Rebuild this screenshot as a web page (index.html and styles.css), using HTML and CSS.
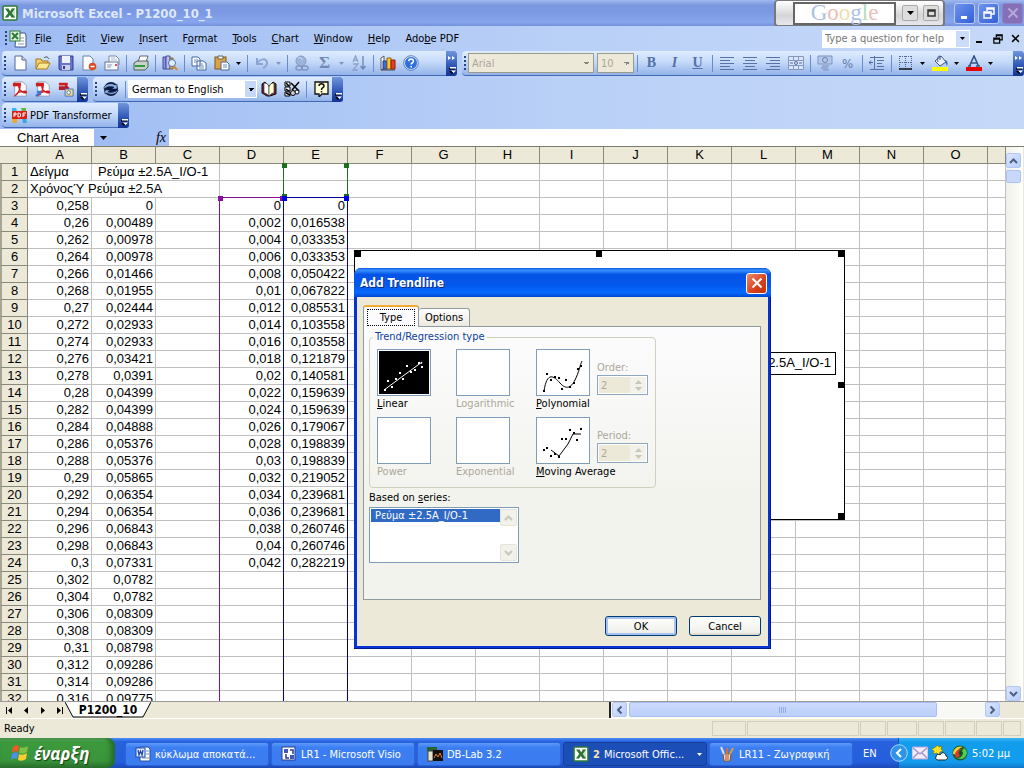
FILE: index.html
```html
<!DOCTYPE html>
<html lang="el">
<head>
<meta charset="utf-8">
<title>Microsoft Excel - P1200_10_1</title>
<link rel="stylesheet" href="styles.css">
</head>
<body>
<svg class="defs" aria-hidden="true">
  <symbol id="excel" viewBox="0 0 16 16"><rect x="1" y="1" width="14" height="14" rx="1" fill="#fff" stroke="#2d7a35" stroke-width="1.6"/><path d="M9 3h4v10H9z" fill="#cfe5cb"/><path d="M3 3.5h3.500l1.700 2.700L10 3.500h3L9.800 8l3.300 4.500H9.600L7.900 9.900 6.100 12.500H2.900L6.200 8z" fill="#2c7734"/></symbol>
  <symbol id="down" viewBox="0 0 7 4"><path d="M0 0h7L3.500 4z" fill="currentColor"/></symbol>
  <symbol id="cap" viewBox="0 0 11 24"><path d="M3 16h6v1.500H3zM3 19h6l-3 3z" fill="#000"/><path d="M4 15h6v1.500H4zM5 18.500h5l-2.500 2.500z" fill="#fff"/></symbol>
  <symbol id="more" viewBox="0 0 11 24"><path d="M2 4l3 2-3 2zM6 4l3 2-3 2z" fill="#fff"/></symbol>
  <symbol id="pdf" viewBox="0 0 18 18"><path d="M3 1h9l4 4v12H3z" fill="#fff" stroke="#8c9ab5"/><path d="M1 2h9v4H1z" fill="#d31c1c"/><path d="M4 16c2-1 5-6 5-9 0-2-2-2-1 1 1 3 5 6 8 5 1-1-1-2-4-1-3 0-6 1-8 4z" fill="none" stroke="#d31c1c" stroke-width="1.500"/></symbol>
  <symbol id="page" viewBox="0 0 16 16"><path d="M3 1h7l4 4v10H3z" fill="#fff" stroke="#52699a"/><path d="M10 1v4h4" fill="#c9d8f3" stroke="#52699a"/></symbol>
  <symbol id="lines" viewBox="0 0 16 16"><path d="M1 2.500h14M1 5.500h10M1 8.500h14M1 11.500h10M1 14.500h14" stroke="#5872a6"/></symbol>
  <symbol id="up" viewBox="0 0 9 6"><path d="M1 5l3.500-3.500L8 5" fill="none" stroke="currentColor" stroke-width="2"/></symbol>
  <symbol id="restore" viewBox="0 0 12 12"><path d="M4 4V1h7v6H8M4 2h7" fill="none" stroke="currentColor" stroke-width="1.500"/><path d="M1 5h7v6H1zM1 6h7" fill="none" stroke="currentColor" stroke-width="1.500"/></symbol>
  <symbol id="cross" viewBox="0 0 12 12"><path d="M1.500 1.500l9 9M10.500 1.500l-9 9" stroke="currentColor" stroke-width="2"/></symbol>
</svg>

<header class="titlebar">
  <svg class="i16"><use href="#excel"/></svg>
  <h1>Microsoft Excel - P1200_10_1</h1>
  <div class="deskbar">
    <div class="google"><span class="g-b">G</span><span class="g-r">o</span><span class="g-y">o</span><span class="g-b">g</span><span class="g-g">l</span><span class="g-r">e</span></div>
    <button class="db-btn" aria-label="Search options"><svg width="7" height="4"><use href="#down"/></svg></button>
    <button class="db-btn" aria-label="Open window"><svg width="9" height="8" viewBox="0 0 9 8"><path d="M1 1h7v6H1zM1 2h7" fill="none" stroke="#333" stroke-width="1.500"/></svg></button>
  </div>
  <div class="winbtns">
    <button aria-label="Minimize"><svg width="12" height="12"><path d="M2 9h6v3H2z" fill="#fff"/></svg></button>
    <button aria-label="Restore"><svg width="12" height="12"><use href="#restore"/></svg></button>
    <button class="off" aria-label="Close"><svg width="12" height="12"><use href="#cross"/></svg></button>
  </div>
</header>

<div class="chrome">
  <nav class="menubar">
    <span class="grip"></span>
    <svg width="18" height="18" viewBox="0 0 18 18"><path d="M7 3h9l1 2v12H6z" fill="#fff" stroke="#3d578c"/><path d="M12 8h3M12 11h3M9 14h6" stroke="#7f97c9"/><rect x="1" y="1" width="10" height="10" fill="#e4f2df" stroke="#2d7a35"/><path d="M3 3l6 6M9 3L3 9" stroke="#2d7a35" stroke-width="2"/></svg>
    <button><u>F</u>ile</button><button><u>E</u>dit</button><button><u>V</u>iew</button><button><u>I</u>nsert</button><button>F<u>o</u>rmat</button><button><u>T</u>ools</button><button><u>C</u>hart</button><button><u>W</u>indow</button><button><u>H</u>elp</button><button>Ado<u>b</u>e PDF</button>
    <div class="ask"><input type="text" aria-label="Type a question for help" placeholder="Type a question for help"><button aria-label="Recent questions"><svg width="5" height="3"><use href="#down"/></svg></button></div>
    <div class="docbtns">
      <button aria-label="Minimize document"><svg width="10" height="10"><path d="M1 7h6v2H1z"/></svg></button>
      <button aria-label="Restore document"><svg width="10" height="10"><use href="#restore"/></svg></button>
      <button aria-label="Close document"><svg width="9" height="9"><use href="#cross"/></svg></button>
    </div>
  </nav>

  <div class="bars">
    <div class="bar standard">
      <span class="grip"></span>
      <button class="tb" aria-label="New"><svg class="i16"><use href="#page"/></svg></button>
      <button class="tb" aria-label="Open"><svg class="i16" viewBox="0 0 16 16"><path d="M1 14V4h5l1 2h6v3" fill="#f7d268" stroke="#9c7420"/><path d="M1 14l3-6h11l-3 6z" fill="#ffe690" stroke="#a87b22"/><path d="M9 3c2-2 4-1 5 1" fill="none" stroke="#444"/></svg></button>
      <button class="tb" aria-label="Save"><svg class="i16" viewBox="0 0 16 16"><path d="M1 1h14v14H2l-1-1z" fill="#6a74c8" stroke="#353d88"/><path d="M4 1h8v7H4z" fill="#eef2ff"/><path d="M4 10h8v5H4z" fill="#c9cfe9"/><path d="M5 11h2v3H5z" fill="#353d88"/></svg></button>
      <button class="tb" aria-label="Permission"><svg class="i16" viewBox="0 0 16 16"><path d="M2 1h7l3 3v11H2z" fill="#fff" stroke="#6a7ea8"/><circle cx="11.500" cy="11.500" r="3.800" fill="#dd4a22"/><path d="M9.500 11.500h4" stroke="#fff" stroke-width="1.500"/></svg></button>
      <button class="tb" aria-label="E-mail"><svg class="i16" viewBox="0 0 16 16"><path d="M5 7V1h7l3 3v6" fill="#fff" stroke="#7788aa"/><path d="M7 3h4M7 5h6" stroke="#a9b6d2"/><rect x="1" y="7" width="13" height="8" fill="#f7f9ff" stroke="#667799"/><path d="M3 10h5M3 12h4" stroke="#8895b5"/><path d="M11 9h2v2h-2z" fill="#d55"/></svg></button>
      <i class="sep"></i>
      <button class="tb" aria-label="Print"><svg class="i16" viewBox="0 0 16 16"><path d="M5 7l2-6h8l-2 6" fill="#fff" stroke="#667"/><path d="M1 8l3-2h11v6l-3 3H1z" fill="#c7d3c9" stroke="#4d5f60"/><path d="M2 11h10" stroke="#2d9b40" stroke-width="2"/></svg></button>
      <i class="sep"></i>
      <button class="tb" aria-label="Research"><svg class="i16" viewBox="0 0 16 16"><path d="M1 2h3v12H1z" fill="#8e93dd" stroke="#464c98"/><path d="M4 1h4v13H4z" fill="#b9bff0" stroke="#464c98"/><path d="M8 3h3v11H8z" fill="#e0b56a" stroke="#7d6230"/><circle cx="10" cy="8" r="3.500" fill="#def" stroke="#57729e"/><path d="M12 11l3 4" stroke="#d0882a" stroke-width="2"/></svg></button>
      <i class="sep"></i>
      <button class="tb" aria-label="Copy"><svg class="i16" viewBox="0 0 16 16"><path d="M1 2h6l2 2v7H1zM6 6h6l3 2v7H6z" fill="#fff" stroke="#4767a4"/><path d="M3 5h4M3 7h3M8 9h4M8 11h5M8 13h5" stroke="#6b8ac8"/></svg></button>
      <button class="tb" aria-label="Paste"><svg class="i16" viewBox="0 0 16 16"><rect x="1" y="2" width="11" height="12" fill="#dca245" stroke="#80571b"/><path d="M4 1h5v3H4z" fill="#eee" stroke="#666"/><path d="M7 7h6l2 2v6H7z" fill="#fff" stroke="#4767a4"/><path d="M9 10h4M9 12h4" stroke="#6b8ac8"/></svg></button>
      <button class="drop" aria-label="Paste options"><svg width="5" height="3"><use href="#down"/></svg></button>
      <i class="sep"></i>
      <button class="tb" disabled aria-label="Undo"><svg class="i16" viewBox="0 0 16 16"><path d="M3 3v6h6M3 9c3-6 10-6 10-1 0 3-2 4-4 5" fill="none" stroke="#8da5d4" stroke-width="2"/></svg></button>
      <button class="drop off" disabled aria-label="Undo list"><svg width="5" height="3"><use href="#down"/></svg></button>
      <i class="sep"></i>
      <button class="tb" disabled aria-label="Hyperlink"><svg class="i16" viewBox="0 0 16 16"><circle cx="7" cy="6" r="5" fill="#9eb3da" stroke="#889dc6"/><path d="M4 3c2-1 4 0 4 2" stroke="#d4e2fa" fill="none"/><rect x="2" y="11" width="6" height="4" rx="2" fill="none" stroke="#8195bf" stroke-width="1.500"/><rect x="8" y="11" width="6" height="4" rx="2" fill="none" stroke="#8195bf" stroke-width="1.500"/></svg></button>
      <button class="tb sigma" disabled aria-label="AutoSum">Σ</button>
      <button class="drop off" disabled aria-label="AutoSum options"><svg width="5" height="3"><use href="#down"/></svg></button>
      <button class="tb" disabled aria-label="Sort ascending"><svg class="i16" viewBox="0 0 16 16"><path d="M2 7l2.500-6L7 7M3 5h3M2 9h5l-5 6h5" fill="none" stroke="#8da0c9" stroke-width="1.300"/><path d="M12 1v13M9.500 11l2.500 3 2.500-3" fill="none" stroke="#6c83b5" stroke-width="1.300"/></svg></button>
      <i class="sep"></i>
      <button class="tb" aria-label="Chart Wizard"><svg class="i16" viewBox="0 0 16 16"><path d="M1 15V3l3-2v13z" fill="#fff" stroke="#556"/><path d="M3 6h4v8H3z" fill="#3c6cd8" stroke="#223e8a"/><path d="M7 3h4v11H7z" fill="#ffc62b" stroke="#8d6413"/><path d="M11 5h4v9h-4z" fill="#e6401e" stroke="#8c210d"/><path d="M1 15h14" stroke="#444"/></svg></button>
      <button class="tb" aria-label="Help"><svg class="i16" viewBox="0 0 16 16"><circle cx="8" cy="8" r="6.500" fill="#2f6fdb" stroke="#e8f0ff"/><circle cx="8" cy="8" r="7.300" fill="none" stroke="#3460b0" stroke-width=".7"/><path d="M5.700 6.300c0-3 4.800-3 4.800-.2 0 1.700-2.300 1.600-2.300 3.400M8.200 11v1.600" fill="none" stroke="#fff" stroke-width="1.600"/></svg></button>
      <span class="grow"></span>
      <button class="cap" aria-label="Toolbar options"><svg width="11" height="24"><use href="#more"/><use href="#cap"/></svg></button>
    </div>
    <div class="bar formatting">
      <span class="grip"></span>
      <select class="combo font" disabled aria-label="Font"><option>Arial</option></select>
      <select class="combo size" disabled aria-label="Font size"><option>10</option></select>
      <i class="sep"></i>
      <button class="tb fmt" disabled aria-label="Bold"><b>B</b></button>
      <button class="tb fmt" disabled aria-label="Italic"><em>I</em></button>
      <button class="tb fmt" disabled aria-label="Underline"><u>U</u></button>
      <i class="sep"></i>
      <button class="tb" disabled aria-label="Align left"><svg class="i16"><use href="#lines"/></svg></button>
      <button class="tb" disabled aria-label="Center"><svg class="i16" viewBox="0 0 16 16"><path d="M1 2.500h14M3 5.500h10M1 8.500h14M3 11.500h10M1 14.500h14" stroke="#5872a6"/></svg></button>
      <button class="tb" disabled aria-label="Align right"><svg class="i16 flip"><use href="#lines"/></svg></button>
      <button class="tb" disabled aria-label="Merge and center"><svg class="i16" viewBox="0 0 16 16"><path d="M.5 1.500h15v13H.5zM.5 5.500h15M.5 10.500h15M5.500 1.500v4M10.500 1.500v4M5.500 10.500v4M10.500 10.500v4" fill="#d9e5fb" stroke="#8497bf"/><path d="M2 8h3M11 8h3" stroke="#566c9c"/><circle cx="8" cy="8" r="1.500" fill="none" stroke="#566c9c"/></svg></button>
      <i class="sep"></i>
      <button class="tb" disabled aria-label="Currency"><svg class="i16" viewBox="0 0 16 16"><path d="M1 1h14v8H1z" fill="#b6c8ea" stroke="#7e93c0"/><circle cx="8" cy="5" r="2.500" fill="none" stroke="#6c82b1"/><path d="M5 11h7M4 13h7M6 15h6" stroke="#8c9fc9" stroke-width="1.500"/></svg></button>
      <button class="tb pct" disabled aria-label="Percent">%</button>
      <i class="sep"></i>
      <button class="tb" disabled aria-label="Decrease indent"><svg class="i16" viewBox="0 0 16 16"><path d="M1 2.500h14M8 5.500h7M8 8.500h5M8 11.500h7M1 14.500h14M5.500 1v14" stroke="#5872a6"/><path d="M0 7.500h4M0 7.500l2-2M0 7.500l2 2" stroke="#47639e" fill="none"/></svg></button>
      <i class="sep"></i>
      <button class="tb" aria-label="Borders"><svg class="i16" viewBox="0 0 16 16"><path d="M2 1.500h12M2 7.500h12M1.500 1v13M7.500 1v13M13.500 1v13" stroke="#52658f" stroke-dasharray="1 1"/><path d="M1 14h13" stroke="#111" stroke-width="1.500"/></svg></button>
      <button class="drop" aria-label="Border options"><svg width="5" height="3"><use href="#down"/></svg></button>
      <button class="tb" aria-label="Fill colour"><svg class="i16" viewBox="0 0 16 16"><path d="M3 6l6-5 5 6-6 4z" fill="#e9effb" stroke="#40557f"/><path d="M6 7c-1-4 0-6 2-6v4" fill="none" stroke="#40557f"/><path d="M13 5c3 1 3 4 2 6-1-2-1-3-2-4z" fill="#3769bd"/><path d="M0 12h16v4H0z" fill="#ff0"/></svg></button>
      <button class="drop" aria-label="Fill options"><svg width="5" height="3"><use href="#down"/></svg></button>
      <button class="tb" aria-label="Font colour"><svg class="i16" viewBox="0 0 16 16"><path d="M3.500 11L8 1l4.500 10M5 8h6M2 11h3M10 11h4" fill="none" stroke="#34548f" stroke-width="1.600"/><path d="M0 12h16v4H0z" fill="#e80000"/></svg></button>
      <button class="drop" aria-label="Font colour options"><svg width="5" height="3"><use href="#down"/></svg></button>
      <span class="grow"></span>
      <button class="cap" aria-label="Toolbar options"><svg width="11" height="24"><use href="#more"/><use href="#cap"/></svg></button>
    </div>
  </div>

  <div class="bars">
    <div class="bar">
      <span class="grip"></span>
      <button class="tb" aria-label="Convert to PDF"><svg class="i16"><use href="#pdf"/></svg></button>
      <button class="tb" aria-label="Convert and e-mail"><svg class="i16" viewBox="0 0 18 18"><use href="#pdf"/><path d="M1 17l5-5M2 12h4v4" stroke="#3978d8" stroke-width="2" fill="none"/></svg></button>
      <button class="tb" aria-label="Convert and review"><svg class="i16" viewBox="0 0 18 18"><path d="M1 2h10v3H1z" fill="#d31c1c"/><path d="M1 6h7V3l5 5-5 5v-3H1z" fill="#b51b2b"/><path d="M8 9h9v8H8z" fill="#f5dc7a" stroke="#426cc4"/><circle cx="12" cy="13" r="2" fill="#fff" stroke="#426cc4"/></svg></button>
      <button class="cap" aria-label="Toolbar options"><svg width="11" height="24"><use href="#cap"/></svg></button>
    </div>
    <div class="bar">
      <span class="grip"></span>
      <button class="tb" aria-label="Translate"><svg class="i16" viewBox="0 0 16 16"><circle cx="8" cy="8" r="7" fill="#0b1942"/><path d="M1 6c3-4 8-4 11-2l2-1v5H9l2-2C8 5 4 5 1 8zM15 10c-3 4-8 4-11 2l-2 1V9h5l-2 2c3 1 7 0 10-2z" fill="#90b4ea" stroke="#0b1942" stroke-width=".6"/></svg></button>
      <i class="sep"></i>
      <select class="combo lang" aria-label="Translation direction"><option>German to English</option></select>
      <button class="tb" aria-label="Dictionary"><svg class="i16" viewBox="0 0 16 16"><path d="M1 3l3-2 4 4 4-4 3 2v10l-6 2H6l-5-3z" fill="#7a2742" stroke="#111"/><path d="M3 2c3 0 4 1 5 4v9c-2-2-3-3-5-3z" fill="#fff" stroke="#222" stroke-width=".6"/><path d="M13 2c-3 0-4 1-5 4v9c2-2 3-3 5-3z" fill="#ffffc9" stroke="#222" stroke-width=".6"/></svg></button>
      <button class="tb" aria-label="Options"><svg class="i16" viewBox="0 0 16 16"><path d="M1 1h5v4H1zM1 6h5v4H1zM1 11h5v4H1z" fill="#fff" stroke="#000"/><path d="M2 2l3 3M2 8l3 2M2 12l4 2M7 2l8 8M15 1L8 9" stroke="#000" stroke-width="1.500"/><circle cx="9" cy="12" r="2.500" fill="#ccd" stroke="#000"/><circle cx="13" cy="11" r="2" fill="#fff" stroke="#000"/></svg></button>
      <i class="sep"></i>
      <button class="tb" aria-label="Translator help"><svg class="i16" viewBox="0 0 16 16"><path d="M2 1h13v12H9l-3 3v-3H2z" fill="#ffffd8" stroke="#111" stroke-width="1.300"/><path d="M6 5c0-3 5-3 5 0 0 2-2.500 1.500-2.500 4M8.500 10v1.500" fill="none" stroke="#111" stroke-width="1.500"/></svg></button>
      <button class="cap" aria-label="Toolbar options"><svg width="11" height="24"><use href="#cap"/></svg></button>
    </div>
  </div>

  <div class="bars">
    <div class="bar">
      <span class="grip"></span>
      <button class="pdft"><svg width="17" height="16" viewBox="0 0 17 16"><path d="M1 1h4l1 3H1z" fill="#39b6e6"/><path d="M10 1h5v4h-4z" fill="#5eb944"/><path d="M1 11h5v5H2z" fill="#f2a52b"/><path d="M11 11h4l1 5h-4z" fill="#34a9dc"/><rect x="1" y="4" width="15" height="8" fill="#dd2016"/><path d="M3 10V6h2v2H3M7 6v4h1.500l1-1V7l-1-1zM12 10V6h3M12 8h2" fill="none" stroke="#fff"/></svg>PDF Transformer</button>
      <button class="cap" aria-label="Toolbar options"><svg width="11" height="24"><use href="#cap"/></svg></button>
    </div>
  </div>
</div>

<div class="formula">
  <input class="namebox" type="text" value="Chart Area" aria-label="Name Box">
  <div class="fxarea"><button aria-label="Name list"><svg width="7" height="4"><use href="#down"/></svg></button><button class="fx" aria-label="Insert Function">fx</button></div>
  <input class="fxinput" type="text" aria-label="Formula Bar">
</div>

<main class="sheet">
  <div class="cells">
    <table>
      <colgroup id="cols"></colgroup>
      <thead><tr id="head"></tr></thead>
      <tbody id="rows"></tbody>
    </table>
    <div class="range green"><i></i><i></i><i></i><i></i></div>
    <div class="range purple"><i></i><i></i></div>
    <div class="range blue"><i></i><i></i></div>
    <div class="chart">
      <div class="legend">Ρεύμα ±2.5A_I/O-1</div>
      <i class="h nw"></i><i class="h n"></i><i class="h ne"></i><i class="h e"></i><i class="h se"></i>
    </div>
  </div>
  <div class="vscroll">
    <button class="sb" aria-label="Scroll up"><svg width="9" height="6"><use href="#up"/></svg></button>
    <span class="vthumb"></span>
    <span class="grow"></span>
    <button class="sb" aria-label="Scroll down"><svg class="turn" width="9" height="6"><use href="#up"/></svg></button>
  </div>
</main>

<div class="tabs">
  <div class="nav">
    <button aria-label="First sheet"><svg width="8" height="7"><path d="M1 0h1v7H1zM7 0v7L3 3.500z"/></svg></button>
    <button aria-label="Previous sheet"><svg width="8" height="7"><path d="M6 0v7L2 3.500z"/></svg></button>
    <button aria-label="Next sheet"><svg width="8" height="7"><path d="M2 0v7l4-3.500z"/></svg></button>
    <button aria-label="Last sheet"><svg width="8" height="7"><path d="M1 0v7l4-3.500zM6 0h1v7H6z"/></svg></button>
  </div>
  <button class="tab"><svg viewBox="0 0 86 16" preserveAspectRatio="none"><path d="M0 0l8 15h70l8-15" fill="#fff" stroke="#000"/></svg><span>P1200_10</span></button>
  <span class="grow"></span>
  <div class="hscroll">
    <button class="sb" aria-label="Scroll left"><svg class="left" width="9" height="6"><use href="#up"/></svg></button>
    <span class="hthumb"></span>
    <span class="htrack"></span>
    <button class="sb" aria-label="Scroll right"><svg class="right" width="9" height="6"><use href="#up"/></svg></button>
  </div>
</div>

<div class="status"><span class="ready">Ready</span><span class="w34"></span><span class="w112"></span><span class="w26"></span><span class="w30"></span><span class="w26"></span><span class="w30"></span><span class="w26"></span><span class="w18"></span></div>

<footer class="taskbar">
  <button class="start"><svg width="18" height="18" viewBox="0 0 18 18"><path d="M2 3c2-2 4-2 6-1L7 8C5 7 3 7 1 9z" fill="#f0592a"/><path d="M9 3c2 1 5 1 8-1l-1 6c-3 2-5 2-8 1z" fill="#7ec242"/><path d="M1 10c2-2 4-2 6-1l-1 6c-2-1-4-1-6 1z" fill="#4d8ff0"/><path d="M8 10c2 1 5 1 8-1l-1 6c-3 2-5 2-8 1z" fill="#fccd34"/></svg>έναρξη</button>
  <div class="tasks">
    <button><svg class="i16" viewBox="0 0 16 16"><path d="M5 1h8l2 2v12H5z" fill="#fff" stroke="#2b4f9e"/><path d="M11 5h3M11 8h3M7 12h7" stroke="#6d8fd1"/><rect x="1" y="2" width="9" height="9" fill="#e6eeff" stroke="#1d47a8"/><path d="M3 4l1 5 1.500-4L7 9l1-5" fill="none" stroke="#1d47a8" stroke-width="1.300"/></svg><span>κύκλωμα αποκατά...</span></button>
    <button><svg class="i16" viewBox="0 0 16 16"><rect x="1" y="1" width="13" height="13" fill="#fff" stroke="#273e92"/><path d="M3 3h4v4H3zM9 9h4v4H9z" fill="#3f57bb"/><path d="M9 4h3v4M5 8v4h3" fill="none" stroke="#273e92" stroke-width="1.500"/></svg><span>LR1 - Microsoft Visio</span></button>
    <button><svg class="i16" viewBox="0 0 16 16"><rect x="0" y="1" width="10" height="4" fill="#2a6333"/><rect x="1" y="5" width="5" height="10" fill="#e8e4c5" stroke="#444"/><rect x="6" y="4" width="10" height="11" fill="#111"/><path d="M7 12l2-4 2 3 2-4 2 5" fill="none" stroke="#f0802b"/></svg><span>DB-Lab 3.2</span></button>
    <button class="active"><svg class="i16"><use href="#excel"/></svg><b>2</b><span>Microsoft Offic...</span><svg class="grp" width="5" height="3"><use href="#down"/></svg></button>
    <button><svg class="i16" viewBox="0 0 16 16"><path d="M4 8h8l-1 7H5z" fill="#efe1bf" stroke="#74582c"/><path d="M5 8L2 1" stroke="#ddd" stroke-width="2"/><path d="M8 8V2" stroke="#e06b2b" stroke-width="2"/><path d="M11 8l3-6" stroke="#d0a045" stroke-width="2"/><path d="M7 9v5M9 9v5" stroke="#c33"/></svg><span>LR11 - Ζωγραφική</span></button>
  </div>
  <span class="lang-ind">EN</span>
  <div class="tray">
    <button class="chev" aria-label="Show hidden icons"><svg width="18" height="18" viewBox="0 0 18 18"><circle cx="9" cy="9" r="8.300" fill="#2f93e8" stroke="#a4d9fb"/><path d="M11 5L7 9l4 4" fill="none" stroke="#fff" stroke-width="2"/></svg></button>
    <svg class="i16" viewBox="0 0 16 16"><rect x="0" y="2" width="16" height="12" rx="1" fill="#f0ecfa" stroke="#b7a7d5"/><path d="M1 3l7 6 7-6M1 13l5-5M15 13l-5-5" fill="none" stroke="#a48fc5" stroke-width="1.300"/></svg>
    <svg class="i16" viewBox="0 0 16 16"><path d="M6 0l1 2 3-1-1 3 2 2-3 1-1 3-2-2-4 1 1-3-3-2 3-1z" fill="#ffdf20" stroke="#5c6a14" stroke-width=".6"/><path d="M4 12c0-3 3-3 4-2 2-4 6-2 6 1 3 1 1 4-1 4H6c-2 0-3-2-2-3z" fill="#fff" stroke="#222"/></svg>
    <svg class="i16" viewBox="0 0 16 16"><circle cx="8" cy="8" r="7.500" fill="#1d5b2c"/><path d="M1 9C1 4 6 0 11 2 7 3 4 6 5 10z" fill="#f0d52d"/><path d="M4 13c-3-5 1-9 6-9-4 2-4 4-2 7z" fill="#e33a28"/><path d="M12 3c5 3 3 10-3 11-3 0-4-1-4-1 5 0 7-4 5-7z" fill="#4bd14a"/><circle cx="9" cy="8" r="1.500" fill="#143"/></svg>
    <time>5:02 μμ</time>
  </div>
</footer>

<section class="dialog" role="dialog" aria-labelledby="dlg-title">
  <div class="dlg-head"><h2 id="dlg-title">Add Trendline</h2><button class="x" aria-label="Close"><svg width="12" height="12"><use href="#cross"/></svg></button></div>
  <div class="dlg-body">
    <div class="dlg-tabs" role="tablist"><button class="on" role="tab" aria-selected="true"><span>Type</span></button><button role="tab" aria-selected="false">Options</button></div>
    <div class="panel">
      <fieldset>
        <legend>Trend/Regression type</legend>
        <div class="types">
          <button class="type sel"><span class="pic"><svg width="50" height="43"><path d="M5 39L43 11l-1 2" fill="none" stroke="#fff"/><path d="M5 38h2v2H5zM8 29h2v2H8zM12 35h2v2h-2zM16 27h2v2h-2zM20 21h2v2h-2zM23 27h2v2h-2zM27 14h2v2h-2zM31 20h2v2h-2zM35 18h2v2h-2zM39 11h2v2h-2zM42 15h2v2h-2z" fill="#fff"/></svg></span><span><u>L</u>inear</span></button>
          <button class="type" disabled><span class="pic"></span><span>Logarithmic</span></button>
          <button class="type"><span class="pic"><svg width="50" height="43"><path d="M6 40C9 20 16 25 22 32s11 5 15-3 5-15 7-19" fill="none" stroke="#000"/><path d="M5 39h2v2H5zM8 22h2v2H8zM12 28h2v2h-2zM16 25h2v2h-2zM20 26h2v2h-2zM23 37h2v2h-2zM27 28h2v2h-2zM31 35h2v2h-2zM35 31h2v2h-2zM39 17h2v2h-2zM42 14h2v2h-2z"/></svg></span><span><u>P</u>olynomial</span></button>
          <div class="spin"><label for="order">Order:</label><div class="num"><input id="order" type="text" value="2" disabled><span class="arrows"><svg width="7" height="4" class="turn"><use href="#down"/></svg><svg width="7" height="4"><use href="#down"/></svg></span></div></div>
          <button class="type" disabled><span class="pic"></span><span>Power</span></button>
          <button class="type" disabled><span class="pic"></span><span>Exponential</span></button>
          <button class="type"><span class="pic"><svg width="50" height="43"><path d="M13 31l8 6 9-12 5-10h8" fill="none" stroke="#000"/><path d="M5 30h2v2H5zM8 28h2v2H8zM12 36h2v2h-2zM16 34h2v2h-2zM20 37h2v2h-2zM23 19h2v2h-2zM27 19h2v2h-2zM31 10h2v2h-2zM35 13h2v2h-2zM38 20h2v2h-2zM42 9h2v2h-2z"/></svg></span><span><u>M</u>oving Average</span></button>
          <div class="spin"><label for="period">Period:</label><div class="num"><input id="period" type="text" value="2" disabled><span class="arrows"><svg width="7" height="4" class="turn"><use href="#down"/></svg><svg width="7" height="4"><use href="#down"/></svg></span></div></div>
        </div>
      </fieldset>
      <div class="series-label" id="series-label">Based on <u>s</u>eries:</div>
      <div class="list" role="listbox" aria-labelledby="series-label">
        <div class="opts"><div class="opt" role="option" aria-selected="true">Ρεύμα ±2.5A_I/O-1</div></div>
        <div class="lscroll"><button disabled aria-label="Up"><svg width="9" height="6"><use href="#up"/></svg></button><button disabled aria-label="Down"><svg class="turn" width="9" height="6"><use href="#up"/></svg></button></div>
      </div>
    </div>
    <div class="actions"><button class="default">OK</button><button>Cancel</button></div>
  </div>
</section>
<script src="sheet.js"></script>
</body>
</html>
```

FILE: styles.css
```css
* { box-sizing: border-box; }
body { margin: 0; height: 100vh; display: flex; flex-direction: column; overflow: hidden; position: relative; background: #ece9d8; color: #000; font: 11px "DejaVu Sans Condensed", "Noto Sans", sans-serif; }
button, input, select { font: inherit; color: inherit; margin: 0; padding: 0; border: 0; background: none; border-radius: 0; }
input { min-width: 0; outline: 0; }
svg { display: block; flex: none; }
.defs { position: absolute; width: 0; height: 0; }
.i16 { width: 16px; height: 16px; }
.grow { flex: 1; }
.flip { transform: scaleX(-1); }
.turn { transform: rotate(180deg); }
.left { transform: rotate(-90deg); }
.right { transform: rotate(90deg); }

.titlebar { flex: none; height: 26px; display: flex; align-items: center; padding: 0 1px 0 2px; background: linear-gradient(#a0b9f0 0, #7b97e0 20%, #7b98e2 45%, #86a6ec 85%, #7590dc); }
h1 { margin: 0; padding-left: 4px; flex: 1; font: bold 13px "DejaVu Sans Condensed", sans-serif; color: #dfe8fb; }
.deskbar { width: 171px; height: 27px; align-self: flex-start; display: flex; align-items: center; gap: 5px; padding: 0 4px 0 17px; margin-right: 9px; border: 2px solid #77777c; border-top-width: 1px; border-radius: 4px; background: linear-gradient(#fff, #d5d5d8 60%, #e8e8ec); }
.google { flex: 0 0 103px; height: 23px; margin-right: 1px; border: 2px solid #666; background: #fff; display: flex; justify-content: center; align-items: center; font: 23px/26px "Liberation Serif", serif; }
.g-b { color: #adc0e6; } .g-r { color: #edbdb9; } .g-y { color: #eee0ae; } .g-g { color: #b5dcb8; }
.db-btn { width: 16px; height: 16px; display: grid; place-items: center; border: 1px solid #aaa; border-radius: 2px; background: #ddd; }
.winbtns { display: flex; gap: 3px; color: #fff; }
.winbtns button { width: 21px; height: 21px; display: grid; place-items: center; border: 1px solid #b9caf5; border-radius: 3px; background: linear-gradient(135deg, #6f93ee, #3060d8); }
.winbtns .off { background: #8570b8; border-color: #8d84c8; color: #b5a8d8; }

.chrome { flex: none; background: linear-gradient(90deg, #9ebcf3, #b9d0f7 55%, #c5d8f8); }
.menubar { height: 25px; display: flex; align-items: center; padding-left: 3px; }
.grip { flex: none; width: 6px; height: 17px; background: repeating-linear-gradient(#27427d 0 2px, transparent 2px 4px) 2px 1px / 2px 100% no-repeat; }
.menubar > button { padding: 0 7px 0 8px; white-space: nowrap; }
.ask { margin-left: auto; width: 148px; height: 18px; background: #fff; display: flex; align-items: center; }
.ask input { flex: 1; padding-left: 3px; }
.ask input::placeholder { color: #777; opacity: 1; }
.ask button { width: 13px; height: 16px; display: grid; place-items: center; background: #cbdcfa; margin-right: 1px; }
.docbtns { display: flex; gap: 8px; padding: 0 4px 0 5px; }

.bars { display: flex; gap: 5px; padding-left: 2px; height: 26px; }
.bar { display: flex; align-items: center; height: 25px; border-bottom: 1px solid #4469b4; border-radius: 4px 0 4px 4px; background: linear-gradient(#dfecff, #c5daf9 45%, #93b3e9); }
.standard { width: 455px; }
.formatting { flex: 1; }
.tb { flex: none; width: 23px; height: 22px; display: grid; place-items: center; }
.drop { width: 11px; height: 22px; display: grid; place-items: center; }
.off { color: #8194bb; }
.sep { flex: none; width: 6px; height: 17px; background: linear-gradient(#6a8ccb, #6a8ccb) 3px 0 / 1px 100% no-repeat; }
.cap { width: 11px; height: 25px; margin-bottom: -1px; border-radius: 0 3px 3px 0; background: linear-gradient(#6f95dd, #2e55b4 60%, #113494); }
.sigma { font: bold 17px "Liberation Serif", serif; color: #7188b9; }
.fmt { font: bold 14px "Liberation Serif", serif; color: #5470a8; }
.fmt em { font-weight: bold; }
.pct { font-size: 13px; color: #6078a8; }
.combo { appearance: none; height: 20px; padding: 0 3px; opacity: 1; --tri: #87857a; color: #aaa797; border: 1px solid #9c9a8c; background-color: #ece9d8; background-image: linear-gradient(45deg, transparent 50%, var(--tri) 50%), linear-gradient(135deg, var(--tri) 50%, transparent 50%); background-size: 3px 3px; background-position: calc(100% - 6px) 8px, calc(100% - 3px) 8px; background-repeat: no-repeat; }
.font { width: 126px; margin-right: 3px; }
.size { width: 37px; }
.lang { width: 129px; height: 18px; --tri: #000; border-color: #fff; color: #000; background-color: #fff; background-image: linear-gradient(45deg, transparent 50%, var(--tri) 50%), linear-gradient(135deg, var(--tri) 50%, transparent 50%), linear-gradient(#c5d8f8, #c5d8f8); background-size: 3px 3px, 3px 3px, 11px 16px; background-position: calc(100% - 5px) 7px, calc(100% - 2px) 7px, 100% 0; }
.pdft { display: flex; align-items: center; gap: 2px; padding: 0 6px 0 3px; white-space: nowrap; }

.formula { flex: none; display: flex; height: 17px; background: #fff; font-family: "Liberation Sans", sans-serif; font-size: 13px; }
.namebox { width: 92px; margin-left: 2px; text-align: center; }
.fxarea { width: 75px; display: flex; align-items: center; justify-content: space-between; padding: 0 3px 0 6px; background: linear-gradient(90deg, #9ebcf3, #a8c2f5); }
.fx { font: italic 14px/15px "Liberation Serif", serif; }
.fxinput { flex: 1; }

.sheet { flex: 1; min-height: 0; display: flex; border-top: 1px solid #7e7c6c; }
.cells { flex: 1; min-width: 0; position: relative; overflow: hidden; background: #fff; font: 13px/16px "Liberation Sans", sans-serif; }
table { width: 100%; table-layout: fixed; border-collapse: separate; border-spacing: 0; }
.c0 { width: 28px; } .cn { width: 64px; }
th, td { height: 17px; padding: 0 2px; border: solid #c0c0c0; border-width: 0 1px 1px 0; white-space: nowrap; text-align: right; font-weight: normal; }
th { background: #ece9d8; border-color: #8a887a; text-align: center; padding: 0; }
tbody th { border-left: 2px solid #a8a693; }
td.t { text-align: left; }
td.indent { padding-left: 6px; }
.range { position: absolute; border: 1px solid; }
.range i { position: absolute; width: 5px; height: 5px; background: currentColor; top: -2px; left: -2px; }
.range i:nth-child(2) { left: auto; right: -2px; }
.range i:nth-child(3) { top: auto; bottom: -2px; }
.range i:nth-child(4) { top: auto; left: auto; bottom: -2px; right: -2px; }
.green { left: 283px; width: 65px; top: 17px; height: 33px; color: #1c701c; border-top-color: transparent; border-bottom: 0; }
.purple { left: 219px; width: 65px; top: 50px; bottom: -1px; color: #8a0f9c; }
.blue { left: 283px; width: 65px; top: 50px; bottom: -1px; color: #0000e8; border-color: #0000a0; }
.chart { position: absolute; left: 354px; top: 103px; width: 491px; height: 270px; background: #fff; border: 1px solid #000; }
.legend { position: absolute; right: 8px; top: 101px; height: 23px; padding: 2px 4px; border: 1px solid #000; white-space: nowrap; }
.h { position: absolute; width: 6px; height: 6px; background: #000; }
.nw { left: 0; top: 0; } .n { left: 241px; top: 0; } .ne { right: 0; top: 0; } .e { right: 0; top: 131px; } .se { right: 0; bottom: 0; }

.vscroll { width: 18px; display: flex; flex-direction: column; gap: 2px; padding: 6px 2px 0 0; background: linear-gradient(90deg, #f0f0ea, #fefefb); border-right: 1px solid #ece9d8; }
.sb { width: 15px; height: 15px; flex: none; display: grid; place-items: center; color: #4d6185; border: 1px solid #b5c7f3; border-radius: 2px; background: linear-gradient(135deg, #dbe6fe, #b9cdf9); }
.vthumb { width: 15px; height: 13px; border: 1px solid #adc2f2; border-radius: 2px; background: #c8d8fb; }

.tabs { flex: none; height: 18px; display: flex; border-top: 1px solid #999; border-bottom: 1px solid #fff; }
.nav { display: flex; align-items: center; }
.nav button { width: 17px; height: 16px; display: grid; place-items: center; }
.tab { position: relative; width: 86px; height: 16px; margin-left: -3px; font: bold 12px/15px "DejaVu Sans Condensed", sans-serif; }
.tab svg { position: absolute; left: 0; top: 0; width: 100%; height: 100%; }
.tab span { position: relative; }
.hscroll { flex: 0 0 391px; margin-right: 24px; display: flex; gap: 2px; padding-left: 1px; border-left: 2px solid #222; background: #f8f8f4; }
.hthumb { flex: 0 0 308px; height: 15px; border: 1px solid #a8bff2; border-radius: 2px; background: repeating-linear-gradient(90deg, #8fabeb 0 1px, transparent 1px 2px) center / 8px 6px no-repeat, linear-gradient(#cbdafd, #bccffa); }
.htrack { flex: 1; }

.status { flex: none; height: 19px; display: flex; align-items: center; gap: 1px; padding: 0 3px 0 4px; background: #ece9d8; }
.ready { flex: 1; }
.status span + span { height: 15px; border: 1px solid #d1cebd; }
.w34 { width: 34px; } .w112 { width: 112px; } .w26 { width: 26px; } .w30 { width: 30px; } .w18 { width: 18px; }

.taskbar { flex: none; height: 30px; display: flex; align-items: center; color: #fff; background: linear-gradient(#4c8df5 0, #2761de 12%, #245edb 80%, #1d48b4); }
.start { width: 115px; height: 30px; display: flex; align-items: center; gap: 5px; padding-left: 11px; border-radius: 0 8px 8px 0; font: italic bold 17px "Noto Sans", sans-serif; text-shadow: 1px 1px 1px #153f15; background: linear-gradient(#64b062 0, #3b9a3c 15%, #3a943b 75%, #2a7230); box-shadow: inset -4px 0 5px #256b2a; }
.tasks { flex: 1; display: flex; gap: 2px; padding: 2px 0 0 10px; min-width: 0; }
.tasks button { flex: 0 1 144px; min-width: 0; height: 24px; display: flex; align-items: center; gap: 4px; padding: 0 4px 0 9px; border: 1px solid #2b66d8; border-radius: 3px; background: linear-gradient(#5e9afc, #3c7ff2 20%, #3b7bee); white-space: nowrap; }
.tasks .active { background: #1c4eb8; border-color: #163f9c; }
.active b { color: #ffe6b0; }
.active .grp { margin-left: auto; }
.lang-ind { width: 35px; }
.tray { height: 30px; width: 126px; display: flex; align-items: center; gap: 4px; border-left: 1px solid #0c59b9; background: linear-gradient(#3cb4f6 0, #119cec 15%, #139cee 80%, #1176c8); white-space: nowrap; }
.chev { margin-left: -9px; }
.tray time { margin-left: 0; }

.dialog { position: absolute; left: 354px; top: 268px; width: 417px; padding: 0 3px 3px; background: #0732d6; border-radius: 7px 7px 0 0; box-shadow: inset -1px -1px #001c93; }
.dlg-head { height: 29px; margin: 0 -3px; padding: 1px 4px 0 6px; display: flex; align-items: center; justify-content: space-between; border-radius: 7px 7px 0 0; background: linear-gradient(#0d5de4 0, #3990ff 8%, #0455e6 22%, #0556ea 55%, #0569fd 85%, #0048d0); }
h2 { margin: 0; font: bold 12px "DejaVu Sans Condensed", sans-serif; color: #fff; text-shadow: 1px 1px #0a2a80; }
.x { width: 21px; height: 21px; display: grid; place-items: center; color: #fff; border: 1px solid #fff; border-radius: 3px; background: linear-gradient(135deg, #ec8a6c, #d8401c 60%, #c03210); }
.dlg-body { background: #ece9d8; padding: 8px 7px 10px 6px; }
.dlg-tabs { display: flex; align-items: flex-end; height: 22px; position: relative; margin-bottom: -1px; }
.dlg-tabs button { width: 51px; height: 19px; border: 1px solid #919b9c; border-radius: 3px 3px 0 0; border-left: 0; background: linear-gradient(#fff, #ece9e0); }
.dlg-tabs .on { width: 56px; height: 22px; padding: 1px 3px; border: 1px solid #919b9c; border-bottom: 0; border-top: 2px solid #f2aa37; background: #fcfcfe; }
.on span { display: block; border: 1px dotted #000; height: 17px; line-height: 15px; }
.panel { height: 274px; border: 1px solid #919b9c; padding: 1px 5px; background: linear-gradient(#fcfcfe, #f3f3ee 60%, #f3f3ee); }
fieldset { width: 287px; height: 160px; margin: 0; padding: 3px 7px 0; border: 1px solid #d0d0bf; border-radius: 4px; }
legend { padding: 0 2px; margin-left: -4px; color: #0b3f9c; line-height: 18px; }
.types { display: grid; grid-template-columns: 79px 80px 61px 51px; grid-auto-rows: 68px; }
.type { display: flex; flex-direction: column; align-items: flex-start; line-height: 15px; white-space: nowrap; text-align: left; min-width: 0; }
.type:disabled, .spin { color: #aca899; }
.pic { width: 54px; height: 47px; padding: 1px; border: 1px solid #7f9db9; background: #fff; }
.sel .pic svg { background: #000; }
.spin { padding-top: 11px; line-height: 15px; }
.num { display: flex; width: 51px; height: 20px; border: 1px solid #8fa6c0; background: #fff; padding: 1px; }
.num input { flex: 1; background: #ece9d8; padding-left: 2px; }
.arrows { width: 16px; display: flex; flex-direction: column; justify-content: center; align-items: center; gap: 3px; color: #c9c7ba; background: #f3f2ea; }
.series-label { line-height: 19px; }
.list { width: 150px; height: 56px; display: flex; border: 1px solid #7f9db9; background: #fff; padding: 1px; }
.opts { flex: 1; }
.opt { height: 13px; line-height: 13px; padding-left: 4px; background: #316ac5; color: #fff; white-space: nowrap; }
.lscroll { width: 17px; display: flex; flex-direction: column; justify-content: space-between; }
.lscroll button { height: 17px; display: grid; place-items: center; border: 1px solid #e6e4d8; border-radius: 2px; background: #f2f1ea; color: #c9c7ba; }
.actions { display: flex; justify-content: flex-end; gap: 12px; padding-top: 16px; }
.actions button { width: 72px; height: 20px; border: 1px solid #003c74; border-radius: 3px; background: linear-gradient(#fff, #f0f0ea 85%, #d8d2bd); }
.actions .default { box-shadow: inset 0 0 0 2px #a6c3f3; }
```

FILE: sheet.js
```js
const A = ['0,258','0,26','0,262','0,264','0,266','0,268','0,27','0,272','0,274','0,276','0,278','0,28','0,282','0,284','0,286','0,288','0,29','0,292','0,294','0,296','0,298','0,3','0,302','0,304','0,306','0,308','0,31','0,312','0,314','0,316'];
const B = ['0','0,00489','0,00978','0,00978','0,01466','0,01955','0,02444','0,02933','0,02933','0,03421','0,0391','0,04399','0,04399','0,04888','0,05376','0,05376','0,05865','0,06354','0,06354','0,06843','0,06843','0,07331','0,0782','0,0782','0,08309','0,08309','0,08798','0,09286','0,09286','0,09775'];
const D = ['0','0,002','0,004','0,006','0,008','0,01','0,012','0,014','0,016','0,018','0,02','0,022','0,024','0,026','0,028','0,03','0,032','0,034','0,036','0,038','0,04','0,042'];
const E = ['0','0,016538','0,033353','0,033353','0,050422','0,067822','0,085531','0,103558','0,103558','0,121879','0,140581','0,159639','0,159639','0,179067','0,198839','0,198839','0,219052','0,239681','0,239681','0,260746','0,260746','0,282219'];

const letters = 'ABCDEFGHIJKLMNO'.split('');
const blank = n => '<td></td>'.repeat(n);

document.getElementById('cols').innerHTML =
  '<col class="c0">' + letters.map(() => '<col class="cn">').join('') + '<col>';
document.getElementById('head').innerHTML =
  '<th></th>' + letters.map(l => `<th scope="col">${l}</th>`).join('') + '<th></th>';

let html =
  '<tr><th scope="row">1</th><td class="t">Δείγμα</td><td class="t indent" colspan="2">Ρεύμα ±2.5A_I/O-1</td>' + blank(13) + '</tr>' +
  '<tr><th scope="row">2</th><td class="t" colspan="3">ΧρόνοςΎ Ρεύμα ±2.5A</td>' + blank(13) + '</tr>';
A.forEach((a, i) => {
  html += `<tr><th scope="row">${i + 3}</th><td>${a}</td><td>${B[i]}</td><td></td><td>${D[i] || ''}</td><td>${E[i] || ''}</td>${blank(11)}</tr>`;
});
document.getElementById('rows').innerHTML = html;
```
